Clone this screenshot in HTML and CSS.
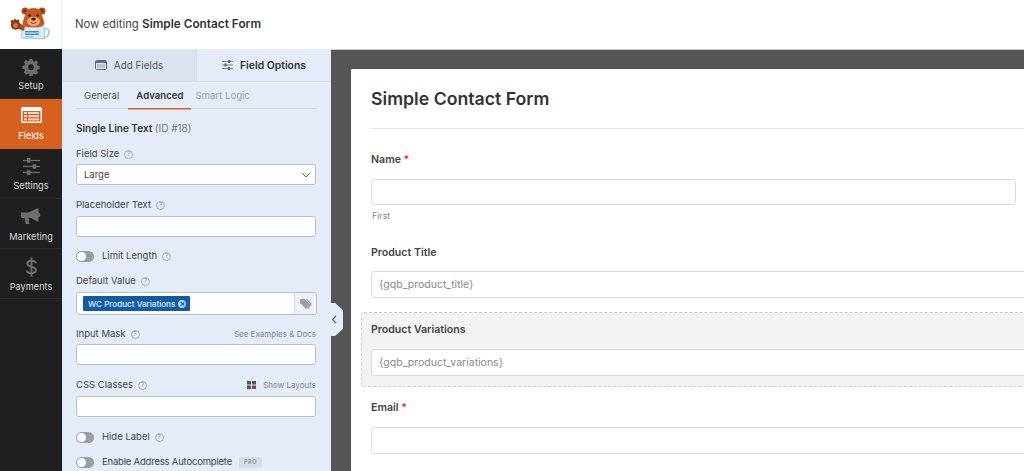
FILE: index.html
```html
<!DOCTYPE html>
<html lang="en">
<head>
<meta charset="utf-8">
<title>Now editing Simple Contact Form</title>
<link rel="stylesheet" href="styles.css">
</head>
<body>
<header class="topbar">
  <div class="logo">
    <svg width="62" height="49" viewBox="0 0 62 49">
      <path d="M43 29 q7 -1 6 4 q-1 5 -7 5" fill="none" stroke="#a9d3e6" stroke-width="2"/>
      <rect x="21.500" y="26" width="23" height="12.500" rx="1.500" fill="#d4ecf7" stroke="#9cc6dc" stroke-width=".8"/>
      <path d="M27 26 l6 3.500 6 -3.500z" fill="#fff"/>
      <path d="M16 28 L24 31 L25 26 L19 23z" fill="#b4491c"/>
      <circle cx="15.500" cy="25" r="4.700" fill="#8a3b16"/>
      <circle cx="12" cy="21.500" r="1.400" fill="#8a3b16"/><circle cx="15" cy="20.300" r="1.400" fill="#8a3b16"/><circle cx="18" cy="21" r="1.400" fill="#8a3b16"/>
      <circle cx="15.500" cy="25.500" r="2.500" fill="#d2763a"/>
      <circle cx="25" cy="11" r="3.500" fill="#b4491c"/><circle cx="42" cy="11" r="3.500" fill="#b4491c"/>
      <circle cx="25" cy="11" r="1.700" fill="#7d3211"/><circle cx="42" cy="11" r="1.700" fill="#7d3211"/>
      <path d="M25 15 q0 -7 8.500 -7 q8.500 0 8.500 7 l2.500 8 q0 4.500 -11 4.500 q-11 0 -11 -4.500z" fill="#c9571f"/>
      <ellipse cx="33.500" cy="21.500" rx="6.500" ry="4.700" fill="#efa877"/>
      <circle cx="29.500" cy="15.500" r="1.200" fill="#2b1a12"/><circle cx="37.500" cy="15.500" r="1.200" fill="#2b1a12"/>
      <ellipse cx="33.500" cy="19" rx="2.300" ry="1.500" fill="#3a1d10"/>
      <path d="M30.500 22.500 q3 2 6 0" fill="none" stroke="#6b2d10" stroke-width=".8"/>
      <rect x="25" y="31" width="14" height="1.400" fill="#3f8bc9"/>
      <rect x="25" y="33.500" width="14" height="1.400" fill="#3f8bc9"/>
      <rect x="25" y="36" width="8" height="1.400" fill="#8fc0e4"/>
    </svg>
  </div>
  <div class="editing">Now editing <strong>Simple Contact Form</strong></div>
</header>
<div class="workspace">
  <nav class="sidebar">
    <a class="nav-item">
      <svg class="nav-icon" width="18" height="18" viewBox="0 0 20 20"><path fill="#6e6e6e" fill-rule="evenodd" d="M8.300 1h3.400l.4 2.400 1.500.7 2-1.400 2.400 2.400-1.400 2 .6 1.500 2.400.4v3.400l-2.400.4-.6 1.500 1.400 2-2.400 2.400-2-1.400-1.500.6-.4 2.400H8.300l-.4-2.400-1.500-.6-2 1.400L2 15.900l1.400-2-.6-1.500-2.400-.4V8.600l2.400-.4.6-1.500L2 4.700l2.400-2.400 2 1.400 1.500-.7zM10 7a3.200 3.200 0 1 0 0 6.400A3.200 3.200 0 0 0 10 7z"/></svg>
      <span>Setup</span>
    </a>
    <a class="nav-item active">
      <svg class="nav-icon" width="21" height="16" viewBox="0 0 21 16"><rect width="21" height="16" rx="2" fill="#fff"/><rect x="1.500" y="4" width="18" height="10.500" fill="#d6611f"/><g fill="#f6d9c6"><rect x="3" y="5" width="3" height="2"/><rect x="7" y="5" width="11" height="2"/><rect x="3" y="8.200" width="3" height="2"/><rect x="7" y="8.200" width="11" height="2"/><rect x="3" y="11.400" width="3" height="2"/><rect x="7" y="11.400" width="11" height="2"/></g></svg>
      <span>Fields</span>
    </a>
    <a class="nav-item">
      <svg class="nav-icon" width="17" height="17" viewBox="0 0 18 18" fill="#6e6e6e"><rect y="2" width="18" height="1.300"/><rect x="4" width="4" height="5" rx=".8"/><rect y="8.300" width="18" height="1.300"/><rect x="10" y="6.500" width="4" height="5" rx=".8"/><rect y="14.700" width="18" height="1.300"/><rect x="4" y="13" width="4" height="5" rx=".8"/></svg>
      <span>Settings</span>
    </a>
    <a class="nav-item low">
      <svg class="nav-icon" width="20" height="17" viewBox="0 0 20 17" fill="#6e6e6e"><path d="M0 4.500h7.500L16 .500h1.500v4.200q2 .6 2 2.300t-2 2.300v4.200H16l-6-3.500-2.500-.5 1 6.500H4.700L3.500 10H1.500q-1.500 0-1.500-1.500z"/></svg>
      <span>Marketing</span>
    </a>
    <a class="nav-item low pay">
      <svg class="nav-icon" width="11" height="20" viewBox="0 0 12 21"><path d="M6 0v21" stroke="#6e6e6e" stroke-width="2"/><path d="M10.800 6.500C10.800 4.500 8.500 3.800 6 3.800S1.500 5 1.500 7 3.500 9.700 6 10.300s4.800 1.400 4.800 3.600-2.300 3.300-4.800 3.300-4.800-.9-4.800-3" fill="none" stroke="#6e6e6e" stroke-width="2.200"/></svg>
      <span>Payments</span>
    </a>
  </nav>

  <aside class="panel">
    <div class="tabs">
      <div class="tab tab-add">
        <svg width="12" height="10" viewBox="0 0 12 10"><rect x=".5" y=".5" width="11" height="9" rx="1" fill="none" stroke="#5f6b78"/><rect x="1" y="1" width="10" height="2" fill="#5f6b78"/><rect x="2" y="4.500" width="8" height="1" fill="#9aa5b1"/><rect x="2" y="6.500" width="8" height="1" fill="#9aa5b1"/></svg>
        Add Fields
      </div>
      <div class="tab tab-options">
        <svg width="11" height="10" viewBox="0 0 11 10" fill="#666"><rect y="1" width="11" height=".8"/><rect x="6" width="2" height="3"/><rect y="4.600" width="11" height=".8"/><rect x="2.500" y="3.500" width="2" height="3"/><rect y="8.200" width="11" height=".8"/><rect x="6" y="7" width="2" height="3"/></svg>
        Field Options
      </div>
    </div>
    <div class="subtabs">
      <span class="subtab">General</span>
      <span class="subtab current">Advanced</span>
      <span class="subtab muted">Smart Logic</span>
    </div>
    <div class="options">
      <h2 class="field-title">Single Line Text <span>(ID #18)</span></h2>

      <div class="label-row row-size"><span class="label">Field Size</span><i class="help">?</i></div>
      <div class="control select-box">Large
        <svg width="10" height="6" viewBox="0 0 10 6"><path d="M1 1l4 4 4-4" fill="none" stroke="#666" stroke-width="1"/></svg>
      </div>

      <div class="label-row row-placeholder"><span class="label">Placeholder Text</span><i class="help">?</i></div>
      <div class="control"></div>

      <div class="toggle-row row-limit"><b class="switch"></b><span class="label">Limit Length</span><i class="help">?</i></div>

      <div class="label-row row-default"><span class="label">Default Value</span><i class="help">?</i></div>
      <div class="control value-box">
        <span class="chip">WC Product Variations <b class="chip-x">×</b></span>
        <span class="tag-btn"><svg width="12" height="10" viewBox="0 0 12 10" fill="#9aa1ab"><path d="M0 0h5l5 5-4 5-6-6z"/><path d="M7 0l5 5-4 5-1-1 3-4-4-5z"/></svg></span>
      </div>

      <div class="label-row row-mask"><span class="label">Input Mask</span><i class="help">?</i><a class="side-link">See Examples &amp; Docs</a></div>
      <div class="control"></div>

      <div class="label-row row-css"><span class="label">CSS Classes</span><i class="help">?</i>
        <a class="side-link layouts"><svg width="9" height="8" viewBox="0 0 9 8" fill="#555"><rect width="4" height="3.500"/><rect x="5" width="4" height="3.500"/><rect y="4.500" width="4" height="3.500"/><rect x="5" y="4.500" width="4" height="3.500"/></svg>Show Layouts</a>
      </div>
      <div class="control"></div>

      <div class="toggle-row row-hide"><b class="switch"></b><span class="label">Hide Label</span><i class="help">?</i></div>
      <div class="toggle-row row-auto"><b class="switch"></b><span class="label">Enable Address Autocomplete</span><em class="pro">PRO</em></div>
    </div>
  </aside>

  <main class="preview">
    <button class="collapse" aria-label="Collapse panel">
      <svg width="6" height="9" viewBox="0 0 6 9"><path d="M5 1L1.500 4.500 5 8" fill="none" stroke="#666" stroke-width="1.200"/></svg>
    </button>
    <section class="card">
      <h1 class="form-title">Simple Contact Form</h1>
      <div class="field f-name">
        <div class="field-label">Name <span class="req">*</span></div>
        <div class="input short"></div>
        <div class="sublabel">First</div>
      </div>
      <div class="field f-title">
        <div class="field-label">Product Title</div>
        <div class="input long">{gqb_product_title}</div>
      </div>
      <div class="field f-var">
        <div class="field-label">Product Variations</div>
        <div class="input long">{gqb_product_variations}</div>
      </div>
      <div class="field f-email">
        <div class="field-label">Email <span class="req">*</span></div>
        <div class="input long"></div>
      </div>
    </section>
  </main>
</div>
</body>
</html>
```

FILE: styles.css
```css
* { box-sizing: border-box; }
html, body { margin: 0; height: 100%; overflow: hidden; }
body { font-family: Inter, "Liberation Sans", sans-serif; color: #444; background: #fff; width: 1024px; height: 471px; }

.topbar { height: 49px; display: flex; align-items: center; background: #fff; }
.logo { width: 62px; height: 49px; flex: none; border-right: 1px solid #f1f1f1; }
.logo svg { display: block; }
.editing { margin-left: 13px; padding-bottom: 1px; font-size: 11.300px; color: #444; }
.editing strong { font-size: 11.800px; font-weight: 600; color: #333; }

.workspace { display: flex; height: 422px; }

.sidebar { width: 62px; flex: none; background: #1f1f1f; }
.nav-item { height: 50px; display: flex; flex-direction: column; align-items: center; justify-content: flex-start; color: #d8d8d8; font-size: 9.200px; border-bottom: 1px solid #2c2c2c; padding-top: 9px; position: relative; }
.nav-item span { position: absolute; top: 31px; line-height: 12px; }
.nav-item.low span { top: 32px; }
.nav-item.active { background: #d6611f; color: #fff; border-bottom-color: #d6611f; padding-top: 8px; }
.nav-item.pay { padding-top: 8px; }

.panel { width: 269px; flex: none; background: #e4ecf9; }
.tabs { display: flex; height: 33px; border-bottom: 1px solid #d5dde8; }
.tab { flex: 1; display: flex; align-items: center; justify-content: center; gap: 7px; font-size: 10.400px; }
.tab-add { background: #dbe3ef; color: #555; border-right: 1px solid #d5dde8; font-size: 9.900px; }
.tab-options { color: #333; font-weight: 600; }

.subtabs { height: 27px; margin: 0 14px; display: flex; border-bottom: 1px solid #d3dbe7; font-size: 9.600px; padding-left: 8px; gap: 17px; align-items: stretch; }
.subtab { color: #555; display: flex; align-items: center; height: 26px; padding: 0; }
.subtab.current { font-weight: 600; color: #333; box-shadow: 0 1.500px 0 #d6611f; padding: 0 8px; margin: 0 -8px; }
.subtab.muted { color: #97a0ab; margin-left: -5px; }

.options { padding: 0 15px 0 14px; }
.field-title { margin: 12px 0 0; font-size: 10px; line-height: 14px; font-weight: 600; color: #333; }
.field-title span { font-weight: 400; color: #777; }

.label-row, .toggle-row { display: flex; align-items: center; font-size: 9.500px; line-height: 14px; }
.label { color: #444; }
.help { width: 9px; height: 9px; border: 1px solid #a5adb8; border-radius: 50%; margin-left: 5px; font-size: 6.500px; line-height: 7px; text-align: center; color: #8f98a3; font-style: normal; }
.control { height: 21px; width: 240px; background: #fff; border: 1px solid #b6c0cd; border-radius: 3px; }

.row-size { margin-top: 12px; margin-bottom: 3px; }
.select-box { display: flex; align-items: center; justify-content: space-between; padding: 0 4px 0 7px; font-size: 9.500px; color: #444; }
.row-placeholder { margin-top: 13px; margin-bottom: 4px; }
.row-limit { margin-top: 12px; }
.row-default { margin-top: 11px; margin-bottom: 4px; }
.row-mask { margin-top: 12px; margin-bottom: 3px; position: relative; }
.row-css { margin-top: 13px; margin-bottom: 4px; }
.row-hide { margin-top: 13px; }
.row-auto { margin-top: 11px; letter-spacing: -.2px; }

.switch { width: 18px; height: 11px; border-radius: 6px; background: #9a9fa6; margin-right: 8px; position: relative; }
.switch::before { content: ""; position: absolute; left: 1px; top: 1px; width: 9px; height: 9px; border-radius: 50%; background: #fff; }

.value-box { display: flex; align-items: center; height: 23px; padding-left: 6px; width: 241px; position: relative; }
.chip { background: #0f5ba7; color: #e6f0fa; font-size: 8.100px; height: 15px; display: flex; align-items: center; padding: 0 4px 0 5px; gap: 3px; border-radius: 1px; font-weight: 500; white-space: nowrap; }
.chip-x { width: 8px; height: 8px; border-radius: 50%; background: #b6cde4; color: #0f5ba7; font-size: 8px; line-height: 8px; text-align: center; font-weight: 700; }
.tag-btn { position: absolute; right: 0; top: 0; bottom: 0; width: 22px; background: #f0f1f3; border-left: 1px solid #d5dae0; display: flex; align-items: center; justify-content: center; border-radius: 0 3px 3px 0; }

.side-link { margin-left: auto; font-size: 8px; letter-spacing: 0; color: #7b8590; display: flex; align-items: center; gap: 7px; }

.pro { margin-left: 7px; background: #d6dde8; color: #8f98a3; font-size: 5.500px; font-style: normal; font-weight: 700; letter-spacing: .5px; padding: 2px 5px; border-radius: 2px; line-height: 7px; }

.preview { flex: 1; min-width: 0; background: #555; padding: 19px 0 0 20px; position: relative; overflow: hidden; border-top: 1px solid #c9c9c9; }
.collapse { position: absolute; left: 0; top: 253px; width: 12px; height: 33px; padding: 0; border: 0; background: #e4ecf9; display: flex; align-items: center; justify-content: flex-start; clip-path: polygon(0 0, 35% 0, 100% 22%, 100% 78%, 35% 100%, 0 100%); }
.card { background: #fff; height: 403px; width: 673px; padding: 0 0 0 20px; }
.form-title { margin: 0; height: 60px; width: 653px; border-bottom: 1px solid #e4e4e4; font-size: 17.700px; line-height: 60px; font-weight: 600; color: #333; }

.field-label { font-size: 10.600px; line-height: 14px; font-weight: 600; color: #444; }
.req { color: #d63638; }
.input { height: 27px; background: #fff; border: 1px solid #dcdcdc; border-radius: 3px; font-size: 10.500px; color: #8a8a8a; padding-left: 7px; display: flex; align-items: center; }
.input.short { width: 645px; height: 26px; margin-top: 12px; }
.input.long { margin-top: 12px; width: 680px; }
.f-title .input.long { margin-top: 11px; }
.sublabel { font-size: 8.800px; line-height: 12px; color: #888; margin-top: 5px; margin-left: 1px; }

.f-name { margin-top: 24px; }
.f-title { margin-top: 24px; }
.f-var { margin: 14px 0 0 -10px; padding: 10px 0 10px 9px; height: 75px; background: #f3f3f3; border: 1px dashed #cfcfcf; border-right: 0; border-radius: 3px 0 0 3px; width: 700px; }
.f-email { margin-top: 14px; }
```
